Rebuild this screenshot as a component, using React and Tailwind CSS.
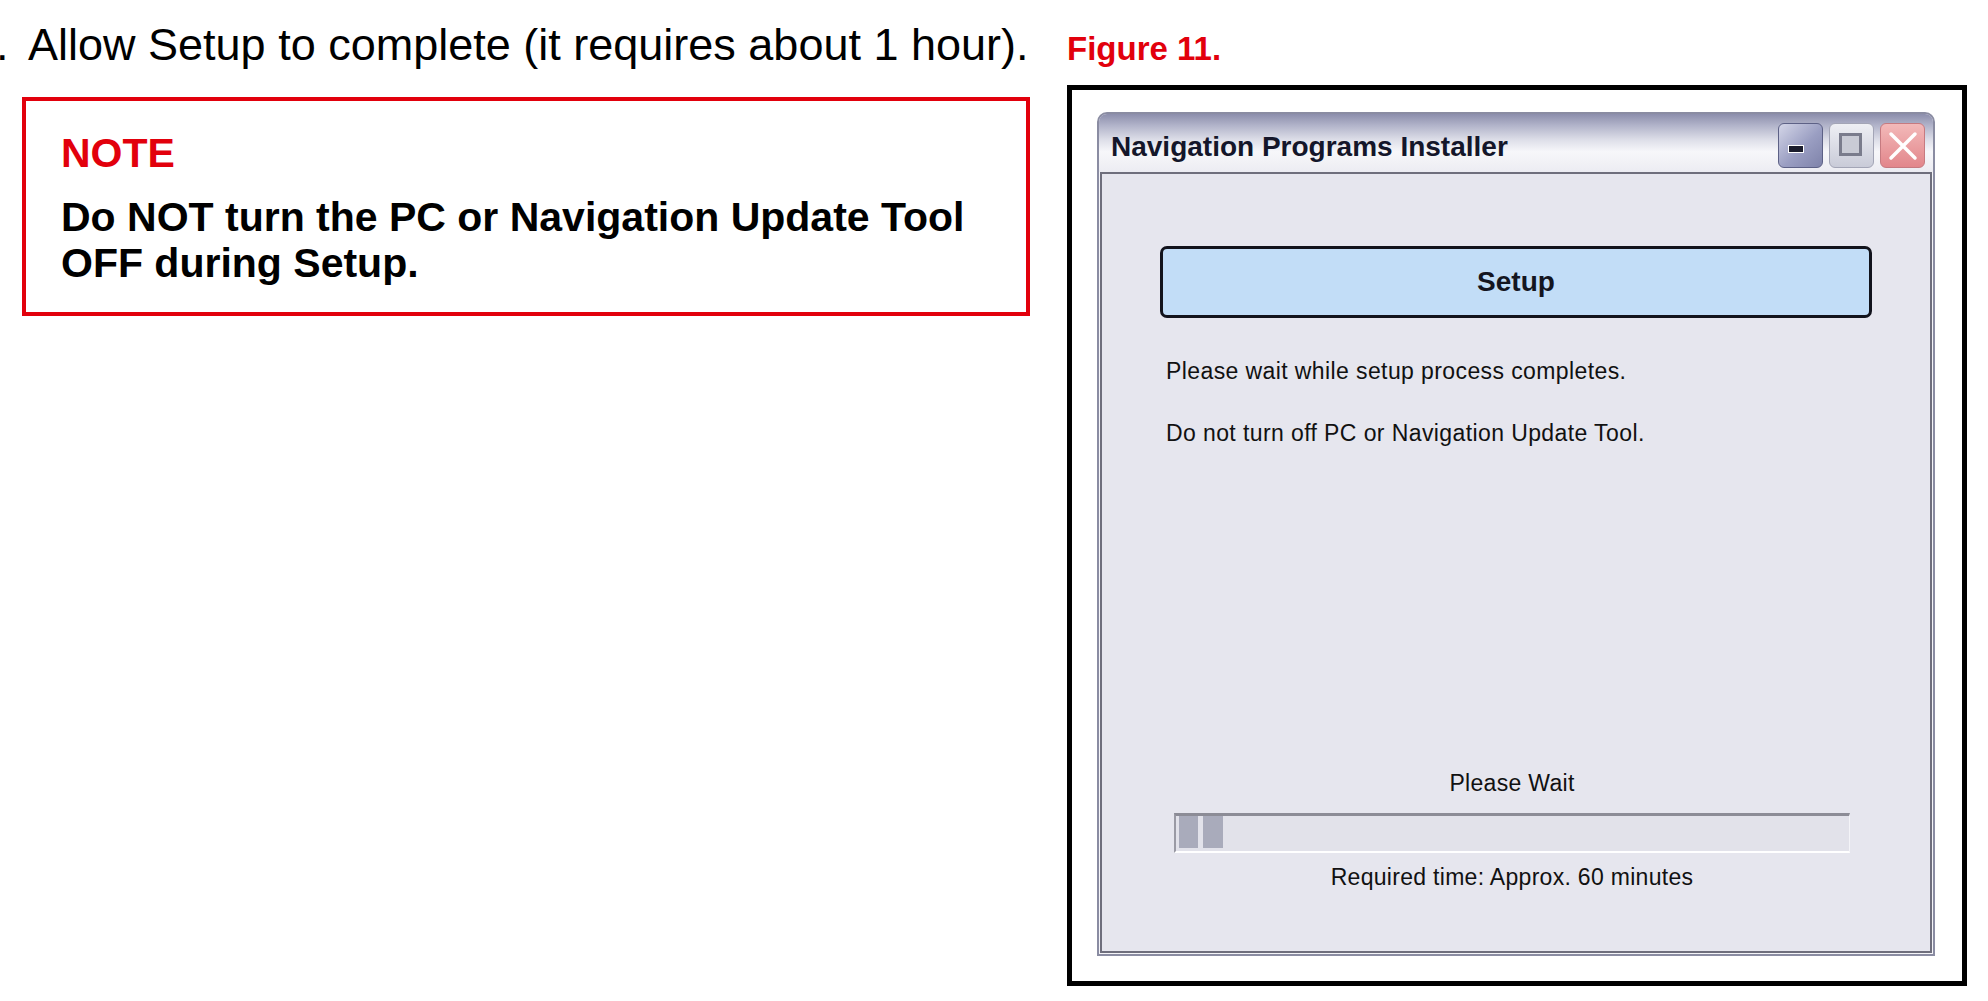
export default function App() {
  return (
    <div className="w-[1988px] h-[1001px] bg-white flex overflow-hidden font-['Liberation_Sans',Arial,sans-serif] text-black">
      {/* Left column: step text + note */}
      <div className="w-[1067px] shrink-0 pt-[22px] flex flex-col">
        <div className="flex text-[45px] leading-[45px]">
          <span className="-ml-[4px] w-[32px]">.</span>
          <span>Allow Setup to complete (it requires about 1 hour).</span>
        </div>
        <div className="mt-[30px] ml-[22px] w-[1008px] border-4 border-[#e2000c] pt-[32px] pl-[35px] pb-[26px]">
          <p className="text-[41px] leading-[41px] font-bold text-[#e2000c]">NOTE</p>
          <p className="mt-[20px] text-[41px] leading-[46px] font-bold">
            Do NOT turn the PC or Navigation Update Tool
            <br />
            OFF during Setup.
          </p>
        </div>
      </div>

      {/* Right column: figure */}
      <div className="pt-[32px] flex flex-col">
        <p className="text-[33px] leading-[33px] font-bold text-[#e2000c]">Figure 11.</p>
        <div className="mt-[20px] w-[900px] h-[901px] border-[5px] border-black pt-[22px] pl-[25px]">
          <InstallerWindow />
        </div>
      </div>
    </div>
  );
}

function InstallerWindow() {
  return (
    <div className="w-[838px] h-[844px] flex flex-col border-2 border-[#8a8ca2] rounded-t-[10px] bg-[#f4f4f8]">
      {/* Title bar */}
      <div className="h-[58px] shrink-0 flex items-start rounded-t-[8px] pl-[12px] pr-[8px] bg-[linear-gradient(to_bottom,#8c8eac_0%,#b2b4ca_20%,#dedfe9_45%,#f7f7fa_65%,#ececf2_100%)]">
        <span className="flex-1 mt-[19px] text-[28px] leading-[28px] font-bold text-[#14162a]">
          Navigation Programs Installer
        </span>
        <div className="mt-[9px] flex gap-[6px]">
          {/* minimize */}
          <div className="w-[45px] h-[45px] rounded-[6px] border border-[#5d6186] bg-[linear-gradient(to_bottom_right,#d4d6e8,#9a9ec2_55%,#7f83aa)] flex items-start pl-[9px] pt-[21px]">
            <div className="w-[16px] h-[8px] bg-[#1a1c2c] border border-white" />
          </div>
          {/* maximize */}
          <div className="w-[45px] h-[45px] rounded-[6px] border border-[#a3a5b6] bg-[linear-gradient(to_bottom,#eeeff4,#c9cbd8)] flex items-start pl-[9px] pt-[9px]">
            <div className="w-[23px] h-[23px] border-[3px] border-[#7a7c8c] bg-[#c9cbd5]" />
          </div>
          {/* close */}
          <div className="w-[45px] h-[45px] rounded-[6px] border border-[#c67a80] bg-[linear-gradient(to_bottom,#f3b9b9,#e2868b)] flex items-center justify-center">
            <svg width="30" height="30" viewBox="0 0 30 30">
              <path d="M3 3 L27 27 M27 3 L3 27" stroke="#fff" strokeWidth="3.5" strokeLinecap="round" />
            </svg>
          </div>
        </div>
      </div>

      {/* Client area */}
      <div className="flex-1 mx-[1px] mb-[1px] border-2 border-[#6e6e7c] bg-[#e6e6ee] flex flex-col text-[#111]">
        <div className="mt-[72px] mx-[58px] h-[72px] rounded-[7px] border-[3px] border-[#12131c] bg-[#c2ddf7] flex items-center justify-center">
          <span className="text-[28px] leading-[28px] font-bold text-[#14151f]">Setup</span>
        </div>

        <div className="mt-[42px] px-[64px] text-[23px] leading-[23px] tracking-[0.4px]">
          <p>Please wait while setup process completes.</p>
          <p className="mt-[39px]">Do not turn off PC or Navigation Update Tool.</p>
        </div>

        <div className="flex-1" />

        <div className="pl-[72px] pr-[80px] pb-[62px] flex flex-col items-center text-[23px] leading-[23px] tracking-[0.3px]">
          <p>Please Wait</p>
          <div className="mt-[18px] w-full h-[40px] border-t-[3px] border-l-2 border-b-2 border-r border-t-[#8c8c96] border-l-[#9a9aa4] border-b-white border-r-[#f4f4f8] bg-[#e2e2ea] flex items-start gap-[5px] pl-[3px]">
            <div className="w-[19px] h-[32px] bg-[#a9abbb]" />
            <div className="w-[20px] h-[32px] bg-[#a9abbb]" />
          </div>
          <p className="mt-[13px]">Required time: Approx. 60 minutes</p>
        </div>
      </div>
    </div>
  );
}
